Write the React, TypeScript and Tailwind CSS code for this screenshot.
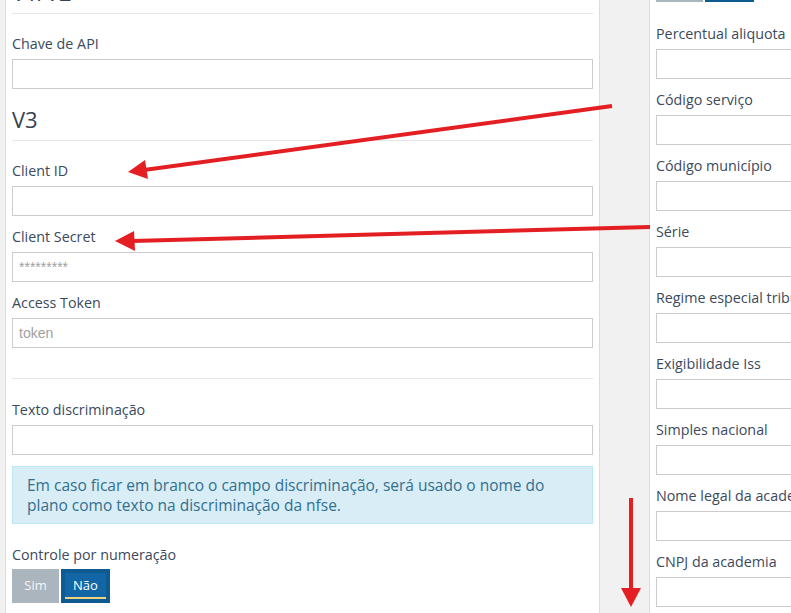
const labelCls = "block text-[14.3px] leading-5 text-[#3b4a5d] pt-[1px] mb-[5px]";
const inputCls =
  "block w-full h-[30px] border border-[#cccccc] bg-white px-[6px] text-[14px] text-[#555] outline-none placeholder:text-[#a0a0a0]";

function Field({ label, placeholder }: { label: string; placeholder?: string }) {
  return (
    <div className="mb-[10px] flex flex-col">
      <label className={labelCls}>{label}</label>
      <input
        className={inputCls}
        style={{ fontFamily: '"Liberation Sans", Arial, sans-serif' }}
        placeholder={placeholder}
      />
    </div>
  );
}

function Toggle() {
  return (
    <div className="flex gap-[2px] h-[34px] text-[13px] text-white">
      <button className="w-[47px] bg-[#aab5bd] text-[#f4f6f7]">Sim</button>
      <button className="w-[49px] bg-[#0d5b91] p-[4px]">
        <span className="flex h-full w-full items-center justify-center border-b-2 border-[#f1d27f] bg-[#1266a6] pt-[1px]">
          Não
        </span>
      </button>
    </div>
  );
}

function Heading({ children, className = "" }: { children: string; className?: string }) {
  return (
    <h3
      className={`text-[22px] leading-[26px] text-[#37424f] pb-[8px] border-b border-[#e6e6e6] mb-[19px] ${className}`}
    >
      {children}
    </h3>
  );
}

export default function App() {
  return (
    <div
      className="relative flex h-[613px] w-[791px] overflow-hidden bg-[#f1f1f1] pl-[5px]"
      style={{ fontFamily: '"Open Sans", "Noto Sans", sans-serif' }}
    >
      {/* left panel */}
      <div className="flex w-[595px] shrink-0 flex-col border-x border-[#dcdcdc] bg-white px-[6px]">
        <Heading className="mt-[-21px]">V1/V2</Heading>
        <Field label="Chave de API" />
        <Heading className="mt-[7px]">V3</Heading>
        <Field label="Client ID" />
        <Field label="Client Secret" placeholder="*********" />
        <Field label="Access Token" placeholder="token" />
        <div className="mt-[20px] mb-[20px] border-t border-[#e6e6e6]" />
        <Field label="Texto discriminação" />
        <div className="mt-[1px] mb-[20px] border border-[#bce8f1] bg-[#d9edf7] px-[14px] py-[8px] text-[15.5px] leading-5 text-[#31708f]">
          Em caso ficar em branco o campo discriminação, será usado o nome do plano como texto na
          discriminação da nfse.
        </div>
        <label className="block text-[14.3px] leading-5 text-[#3b4a5d] pt-[1px] mb-[4px]">
          Controle por numeração
        </label>
        <Toggle />
      </div>

      {/* gutter */}
      <div className="w-[49px] shrink-0" />

      {/* right panel */}
      <div className="flex w-[595px] shrink-0 flex-col border-l border-[#dcdcdc] bg-white px-[6px]">
        <div className="mt-[-32px] mb-[21px]">
          <Toggle />
        </div>
        <Field label="Percentual aliquota" />
        <Field label="Código serviço" />
        <Field label="Código município" />
        <Field label="Série" />
        <Field label="Regime especial tributação" />
        <Field label="Exigibilidade Iss" />
        <Field label="Simples nacional" />
        <Field label="Nome legal da academia" />
        <Field label="CNPJ da academia" />
      </div>

      {/* annotation arrows */}
      <svg className="pointer-events-none absolute inset-0" width="791" height="613">
        <g stroke="#e41f23" strokeWidth="4">
          <line x1="612" y1="106" x2="144" y2="170" />
          <line x1="650" y1="227" x2="132" y2="241" />
          <line x1="631" y1="498" x2="631" y2="590" />
        </g>
        <g fill="#e41f23">
          <polygon points="128,172 145,160 148,179" />
          <polygon points="115,241 134,231 135,251" />
          <polygon points="631,607 621,588 641,588" />
        </g>
      </svg>
    </div>
  );
}
